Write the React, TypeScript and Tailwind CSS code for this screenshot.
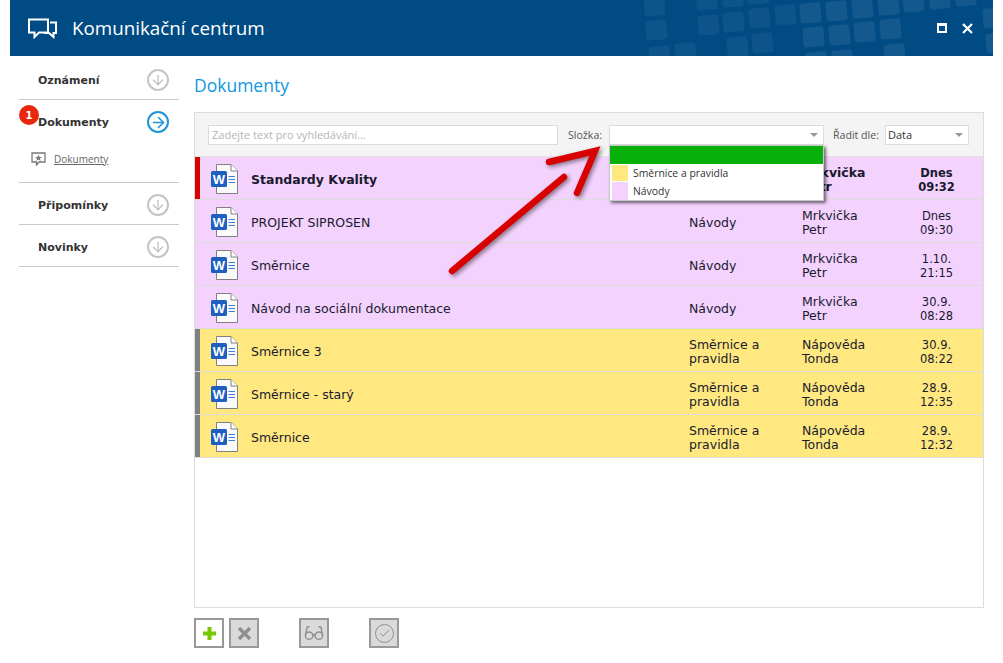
import { ArrowDown, ArrowRight, Check } from 'lucide-react'
import type { ReactNode } from 'react'

const verdana = 'font-["DejaVu_Sans",sans-serif]'

const rows = [
  { name: 'Standardy Kvality', folder: ['Návody'], author: ['Mrkvička', 'Petr'], date: ['Dnes', '09:32'], color: 'bg-[#f3d2fd]', bar: 'bg-[#d90000]', bold: true },
  { name: 'PROJEKT SIPROSEN', folder: ['Návody'], author: ['Mrkvička', 'Petr'], date: ['Dnes', '09:30'], color: 'bg-[#f3d2fd]', bar: 'bg-[#f3d2fd]' },
  { name: 'Směrnice', folder: ['Návody'], author: ['Mrkvička', 'Petr'], date: ['1.10.', '21:15'], color: 'bg-[#f3d2fd]', bar: 'bg-[#f3d2fd]' },
  { name: 'Návod na sociální dokumentace', folder: ['Návody'], author: ['Mrkvička', 'Petr'], date: ['30.9.', '08:28'], color: 'bg-[#f3d2fd]', bar: 'bg-[#f3d2fd]' },
  { name: 'Směrnice 3', folder: ['Směrnice a', 'pravidla'], author: ['Nápověda', 'Tonda'], date: ['30.9.', '08:22'], color: 'bg-[#ffe880]', bar: 'bg-[#808080]' },
  { name: 'Směrnice - starý', folder: ['Směrnice a', 'pravidla'], author: ['Nápověda', 'Tonda'], date: ['28.9.', '12:35'], color: 'bg-[#ffe880]', bar: 'bg-[#808080]' },
  { name: 'Směrnice', folder: ['Směrnice a', 'pravidla'], author: ['Nápověda', 'Tonda'], date: ['28.9.', '12:32'], color: 'bg-[#ffe880]', bar: 'bg-[#808080]' },
]

// tile positions in page pixels, measured off the header picture
const tiles = [
  [644, -4], [696, -10], [722, -13], [747, -16],
  [698, 15], [723, 12], [749, 8], [775, 5], [800, 3], [826, 1], [852, -2], [878, -5], [903, -8], [929, -11], [955, -14],
  [646, 20], [803, 27], [829, 25], [854, 22], [880, 19],
  [649, 46], [675, 43], [727, 37], [752, 33], [806, 52], [832, 50], [884, 44],
  [983, 8], [986, 33],
]

function WordIcon() {
  return (
    <svg width="28" height="32" viewBox="0 0 28 32" className="shrink-0">
      <path d="M5.5 1.5H20L26.5 8V30.5H5.5Z" fill="#fafafa" stroke="#808080" />
      <path d="M20 1.5V8H26.5" fill="#fff" stroke="#808080" />
      <rect x="0" y="8" width="16" height="16" rx="1.5" fill="#1e5fc0" />
      <text x="8" y="21" textAnchor="middle" fontSize="13" fontWeight="700" fill="#fff" fontFamily="Liberation Sans, sans-serif">W</text>
      <path d="M17.5 13.5H24M17.5 16.5H24M17.5 19.5H24" stroke="#3f7fd6" />
    </svg>
  )
}

function HeaderPattern() {
  return (
    <svg width="353" height="56" className="absolute right-0 top-0">
      {tiles.map(([x, y], i) => (
        <rect
          key={i}
          x={x - 640}
          y={y}
          width="21"
          height="20"
          rx="3"
          fill="#ffffff"
          fillOpacity={x > 790 ? 0.08 : 0.05}
          transform={`rotate(-5 ${x - 630} ${y + 10})`}
        />
      ))}
    </svg>
  )
}

function SideItem({ label, active }: { label: string; active?: boolean }) {
  return (
    <div className="flex items-center justify-between pl-[19px] pr-[10px] h-[40px]">
      <span className={`${verdana} pt-[2px] text-[11px] font-bold text-[#333]`}>{label}</span>
      <span className={`flex items-center justify-center w-[22px] h-[22px] rounded-full border-2 ${active ? 'border-[#1a96d8] text-[#1a96d8]' : 'border-[#c4c4c4] text-[#b8b8b8]'}`}>
        {active ? <ArrowRight size={17} strokeWidth={2.2} /> : <ArrowDown size={16} strokeWidth={1.6} />}
      </span>
    </div>
  )
}

function Select({ value, className }: { value?: string; className: string }) {
  return (
    <div className={`flex items-center justify-between h-[20px] bg-white border border-[#dcdcdc] pl-[2px] pr-[5px] ${className}`}>
      <span className='pt-[2px] font-["Open_Sans",sans-serif] text-[11px] text-[#333]'>{value}</span>
      <span className="w-0 h-0 border-x-[4px] border-x-transparent border-t-[4px] border-t-[#999]" />
    </div>
  )
}

function ToolButton({ children, enabled }: { children: ReactNode; enabled?: boolean }) {
  return (
    <div className={`flex items-center justify-center w-[30px] h-[30px] border-2 border-[#999] ${enabled ? 'bg-white' : 'bg-[#dadada]'}`}>
      {children}
    </div>
  )
}

export default function App() {
  return (
    <div className="relative w-[1003px] h-[663px] bg-white overflow-hidden">
      {/* Header */}
      <header className="relative ml-[10px] w-[983px] h-[56px] bg-[#004b84] flex items-center text-white overflow-hidden">
        <HeaderPattern />
        <svg width="30" height="21" viewBox="0 0 30 21" fill="none" stroke="#fff" strokeWidth="2" className="relative ml-[18px]">
          <path d="M1 1.5H20V14.5H11L6.5 19V14.5H1Z" />
          <path d="M22 4.5H28V15H25.5V19L21 15H16" />
        </svg>
        <span className='relative ml-[14px] font-["Open_Sans",sans-serif] text-[18.8px]'>Komunikační centrum</span>
        <div className="absolute left-[927px] top-[23px] w-[10px] h-[10px] border-2 border-t-[3px] border-white" />
        <svg width="11" height="11" viewBox="0 0 11 11" stroke="#fff" strokeWidth="2.2" className="absolute left-[952px] top-[23px]">
          <path d="M1 1L10 10M10 1L1 10" />
        </svg>
      </header>

      <div className="flex">
        {/* Sidebar */}
        <aside className="relative ml-[19px] w-[160px] shrink-0">
          <div className="h-[44px] pt-[4px] border-b border-[#c8c8c8]"><SideItem label="Oznámení" /></div>
          <div className="pt-[2px] h-[83px] border-b border-[#c8c8c8]">
            <SideItem label="Dokumenty" active />
            <div className="flex items-center pl-[12px] h-[30px] mt-[2px] gap-[8px]">
              <svg width="15" height="14" viewBox="0 0 15 14" fill="none" stroke="#777" strokeWidth="1.3">
                <path d="M1 1H14V10H8L5.5 13V10H1Z" />
                <path d="M7.5 2.5L8.5 5H11L9 6.5L9.7 9L7.5 7.5L5.3 9L6 6.5L4 5H6.5Z" fill="#777" stroke="none" />
              </svg>
              <span className='font-["Open_Sans",sans-serif] text-[10px] text-[#666] underline'>Dokumenty</span>
            </div>
          </div>
          <div className="h-[42px] pt-[2px] border-b border-[#c8c8c8]"><SideItem label="Připomínky" /></div>
          <div className="h-[42px] pt-[2px] border-b border-[#c8c8c8]"><SideItem label="Novinky" /></div>
          <span className={`absolute left-0 top-[49px] flex items-center justify-center w-[20px] h-[20px] rounded-full bg-[#e8280c] text-white text-[10px] font-bold ${verdana}`}>1</span>
        </aside>

        {/* Content */}
        <main className="ml-[15px] w-[790px] shrink-0">
          <h1 className='h-[56px] flex items-center pt-[2px] font-["Open_Sans",sans-serif] text-[17.5px] text-[#0f97e0]'>Dokumenty</h1>
          <div className="h-[496px] border border-[#dcdcdc]">
            <div className="flex items-center h-[44px] bg-[#f4f4f4] pl-[13px] border-b border-[#e4e4e4]">
              <div className='flex items-center w-[350px] h-[20px] bg-white border border-[#dcdcdc] pl-[3px] pt-[2px] font-["Open_Sans",sans-serif] text-[11px] text-[#b5b5b5]'>Zadejte text pro vyhledávání...</div>
              <span className='ml-[10px] w-[41px] pt-[2px] font-["Open_Sans",sans-serif] text-[10.6px] text-[#555]'>Složka:</span>
              <Select className="w-[215px]" />
              <span className='ml-[9px] w-[52px] pt-[2px] font-["Open_Sans",sans-serif] text-[10.6px] text-[#555]'>Řadit dle:</span>
              <Select value="Data" className="w-[84px]" />
            </div>
            {rows.map((r, i) => (
              <div key={i} className={`flex items-center h-[43px] border-b border-[#dcdcdc] ${r.color} ${verdana} text-[12.5px] leading-[14px] text-[#1a1a2e] ${r.bold ? 'font-bold' : ''}`}>
                <div className={`w-[5px] h-full shrink-0 ${r.bar}`} />
                <div className="ml-[11px] w-[40px] pt-px shrink-0"><WordIcon /></div>
                <div className="w-[438px] pt-[4px] shrink-0">{r.name}</div>
                <div className="w-[113px] pt-[4px] shrink-0">{r.folder.map(t => <div key={t}>{t}</div>)}</div>
                <div className="w-[88px] pt-[4px] shrink-0">{r.author.map(t => <div key={t}>{t}</div>)}</div>
                <div className="flex-1 pt-[4px] text-center text-[11.5px]">{r.date.map(t => <div key={t}>{t}</div>)}</div>
              </div>
            ))}
          </div>
          <div className="flex mt-[10px]">
            <ToolButton enabled>
              <svg width="13" height="13" viewBox="0 0 13 13" fill="#76c800"><path d="M4.5 0H8.5V4.5H13V8.5H8.5V13H4.5V8.5H0V4.5H4.5Z" /></svg>
            </ToolButton>
            <div className="ml-[5px]">
              <ToolButton>
                <svg width="13" height="13" viewBox="0 0 13 13" stroke="#8f8f8f" strokeWidth="3.4"><path d="M1 1L12 12M12 1L1 12" /></svg>
              </ToolButton>
            </div>
            <div className="ml-[40px]">
              <ToolButton>
                <svg width="20" height="16" viewBox="0 0 22 18" fill="none" stroke="#8f8f8f" strokeWidth="1.6">
                  <circle cx="5.5" cy="12" r="4.2" />
                  <circle cx="16.5" cy="12" r="4.2" />
                  <path d="M9.5 11.5C10.5 10.5 11.5 10.5 12.5 11.5M1.5 11L3 3C3.3 1.8 5 1.5 6 2.5M20.5 11L19 3C18.7 1.8 17 1.5 16 2.5" />
                </svg>
              </ToolButton>
            </div>
            <div className="ml-[40px]">
              <ToolButton>
                <span className="flex items-center justify-center w-[19px] h-[19px] rounded-full border-[1.5px] border-[#8f8f8f]"><Check size={13} strokeWidth={1.8} className="text-[#8f8f8f]" /></span>
              </ToolButton>
            </div>
          </div>
        </main>
      </div>

      {/* Open dropdown */}
      <div className="absolute left-[609px] top-[145px] w-[215px] h-[56px] bg-white border border-[#c8c8c8] shadow-[2px_2px_3px_rgba(0,0,0,0.55)] font-['Open_Sans',sans-serif] text-[10.4px] text-[#333]">
        <div className="h-[18px] bg-[#08b00a]" />
        <div className="flex items-center h-[18px] pl-[2px] gap-[5px]"><span className="w-[16px] h-[16px] bg-[#ffe880]" /><span className="pt-[2px]">Směrnice a pravidla</span></div>
        <div className="flex items-center h-[18px] pl-[2px] gap-[5px]"><span className="w-[16px] h-[18px] bg-[#f3d2fd]" /><span className="pt-[2px]">Návody</span></div>
      </div>

      {/* Annotation arrow */}
      <svg width="170" height="140" viewBox="0 0 170 140" fill="none" className="absolute left-[440px] top-[145px] drop-shadow-[2px_2px_2px_rgba(0,0,0,0.45)]">
        <path d="M12 126L124 32M109 17L155 6L137 48" stroke="#d90000" strokeWidth="6.5" strokeLinecap="round" strokeLinejoin="miter" />
      </svg>
    </div>
  )
}
